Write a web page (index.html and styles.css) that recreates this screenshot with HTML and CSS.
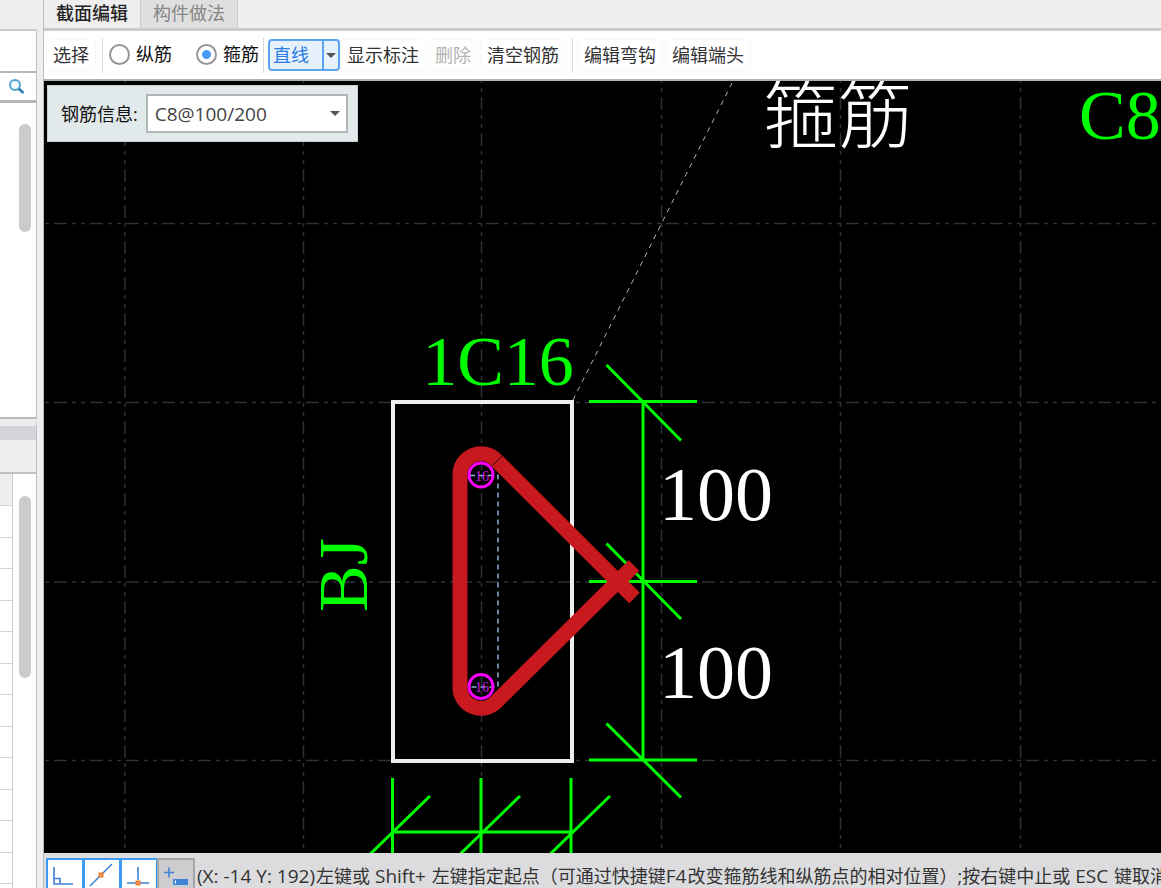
FILE: index.html
```html
<!DOCTYPE html>
<html lang="zh-CN">
<head>
<meta charset="utf-8">
<title>截面编辑</title>
<link rel="stylesheet" href="styles.css">
</head>
<body>
<div class="app">
  <aside class="sidebar">
    <div class="side-head"></div>
    <div class="side-tools"></div>
    <div class="side-search">
      <button class="search-btn" type="button" aria-label="搜索">
        <svg width="18" height="18" viewBox="0 0 18 18"><circle cx="7" cy="7" r="5" fill="#f2fafd" stroke="#4da3cf" stroke-width="2"/><path d="M10.5 10.5L15.500 15" stroke="#2f86b8" stroke-width="3"/></svg>
      </button>
    </div>
    <div class="side-list"><div class="thumb thumb-list"></div></div>
    <div class="side-split"></div>
    <div class="side-title"></div>
    <div class="side-props">
      <table class="props">
        <tr><th></th></tr>
        <tr><td></td></tr><tr><td></td></tr><tr><td></td></tr><tr><td></td></tr>
        <tr><td></td></tr><tr><td></td></tr><tr><td></td></tr><tr><td></td></tr>
        <tr><td></td></tr><tr><td></td></tr><tr><td></td></tr><tr><td></td></tr><tr><td></td></tr>
      </table>
      <div class="thumb thumb-props"></div>
    </div>
  </aside>

  <main class="main">
    <nav class="tabs">
      <button class="tab tab-active" type="button">截面编辑</button>
      <button class="tab" type="button">构件做法</button>
    </nav>
    <div class="toolbar">
      <button class="tool" type="button">选择</button>
      <span class="sep"></span>
      <label class="choice"><input type="radio" name="bar">纵筋</label>
      <label class="choice choice-last"><input type="radio" name="bar" checked>箍筋</label>
      <span class="sep"></span>
      <div class="split">
        <button class="split-main" type="button">直线</button>
        <button class="split-drop" type="button" aria-label="更多"><span class="caret"></span></button>
      </div>
      <button class="tool" type="button">显示标注</button>
      <button class="tool" type="button" disabled>删除</button>
      <button class="tool" type="button">清空钢筋</button>
      <span class="sep"></span>
      <button class="tool" type="button">编辑弯钩</button>
      <button class="tool" type="button">编辑端头</button>
    </div>

    <section class="canvas">
      <svg class="drawing" width="100%" height="100%">
        <g transform="translate(-44 -81)">
          <g class="grid">
            <path d="M125 61V2000M303.500 61V2000M481.500 61V2000M661.500 61V2000M840.500 61V2000M1020.500 61V2000"/>
            <path d="M18 223.500H3000M18 402.500H3000M18 582H3000M18 760.500H3000"/>
          </g>
          <path class="guide" d="M573 400L732 83"/>
          <rect class="outline" x="393" y="402" width="179" height="359"/>
          <g class="dims">
            <path d="M643 401V760M589 401.500H697M589 581.500H697M589 760H697"/>
            <path d="M606.500 365L681 440.500M606.500 543.500L681 619M606.500 723.500L681 797.500"/>
            <path d="M392.500 778V900M481 778V900M571 778V900M392 832H573"/>
            <path d="M430 796L324 899M520 796L414 899M610 796L504 899"/>
          </g>
          <path class="offset" d="M470 475.500H498V687H470"/>
          <path class="stirrup" d="M634.500 598L496 460A21 21 0 0 0 460 475V687A21 21 0 0 0 496 702L634 565.500"/>
          <path class="joint" d="M492 466L502.500 455.500"/>
          <circle class="rebar" cx="481" cy="475" r="12"/>
          <circle class="rebar" cx="481" cy="686.500" r="12"/>
          <text class="rebar-label" x="482" y="481">16</text>
          <text class="rebar-label" x="482" y="692">16</text>
          <text class="cad green" x="498" y="385" text-anchor="middle">1C16</text>
          <text class="cad green" x="1079" y="139">C8</text>
          <text class="cad green" transform="translate(367 612) rotate(-90)">BJ</text>
          <text class="cad white" x="659" y="520">100</text>
          <text class="cad white" x="659" y="698">100</text>
          <text class="cad-cjk white" x="763" y="142">箍筋</text>
        </g>
      </svg>
      <div class="info">
        <label for="rebar-info">钢筋信息:</label>
        <div class="combo">
          <select id="rebar-info"><option>C8@100/200</option></select>
          <span class="caret"></span>
        </div>
      </div>
    </section>

    <footer class="status">
      <button class="snap" type="button" aria-label="正交">
        <svg width="34" height="34" viewBox="0 0 34 34" fill="none" stroke="#3f83d6" stroke-width="1.600"><path d="M6 7V24H25M6 18.500H12V24"/></svg>
      </button>
      <button class="snap" type="button" aria-label="中点">
        <svg width="34" height="34" viewBox="0 0 34 34" fill="none" stroke="#3f83d6" stroke-width="1.600"><path d="M5 26L27 4"/><rect x="14.500" y="13.500" width="3" height="3" fill="#fff" stroke="#ee7d32" stroke-width="2"/></svg>
      </button>
      <button class="snap" type="button" aria-label="垂足">
        <svg width="34" height="34" viewBox="0 0 34 34" fill="none" stroke="#3f83d6" stroke-width="1.600"><path d="M16 7V20M5 23H27"/><rect x="14.500" y="21.500" width="3" height="3" fill="#fff" stroke="#ee7d32" stroke-width="2"/></svg>
      </button>
      <button class="snap snap-on" type="button" aria-label="动态输入">
        <svg width="34" height="34" viewBox="0 0 34 34" fill="none" stroke="#3f83d6" stroke-width="1.600"><path d="M5 12.500H15M10 7.500V17.500"/><rect x="14" y="19" width="15" height="6" fill="#3f83d6" stroke="none"/><path d="M16.500 20.500V23.500" stroke="#fff" stroke-width="1.200"/></svg>
      </button>
      <span class="hint"><span class="latin">(X: -14 Y: 192)</span>左键或<span class="latin"> Shift+ </span>左键指定起点（可通过快捷键<span class="latin">F4</span>改变箍筋线和纵筋点的相对位置）;按右键中止或<span class="latin"> ESC </span>键取消</span>
    </footer>
  </main>
</div>
</body>
</html>
```
FILE: styles.css
```css
* { box-sizing: border-box; }

body {
  margin: 0;
  overflow: hidden;
  font: 18px/24px "Open Sans", "Noto Sans CJK SC", sans-serif;
  color: #333;
}

button, select, input { margin: 0; font: inherit; color: inherit; }
button { padding: 0; border: 0; background: none; white-space: nowrap; }

.app {
  display: grid;
  grid-template-columns: 37px minmax(0, 1fr);
  column-gap: 6px;
  height: 100vh;
  background: #eeeeee;
}

/* sidebar */
.sidebar {
  display: flex;
  flex-direction: column;
  min-height: 0;
  overflow: hidden;
}
.sidebar > div { flex: none; border-right: 1px solid #bfc2c5; }
.sidebar > .side-head { height: 31px; border-right: 0; border-bottom: 2px solid #c9ccd1; }
.side-tools { height: 40px; background: #fff; }
.side-search {
  display: flex;
  justify-content: flex-end;
  align-items: center;
  height: 32px;
  padding-right: 10px;
  background: #fff;
  border-top: 2px solid #bababa;
  border-bottom: 3px solid #b5b5b5;
}
.search-btn { height: 18px; line-height: 0; }
.side-list {
  height: 316px;
  padding: 21px 5px 0 0;
  background: #fff;
  border-bottom: 2px solid #b8b8b8;
}
.thumb { width: 12px; margin-left: auto; border-radius: 6px; background: #cbcbcb; }
.thumb-list { height: 108px; }
.side-split { height: 21px; border-top: 7px solid #eee; background: #d2d4da; }
.side-title { height: 34px; border-bottom: 2px solid #c0c0c2; }
.sidebar > .side-props {
  display: flex;
  flex: 1;
  align-items: flex-start;
  min-height: 0;
  padding-right: 5px;
  background: #fff;
}
.props { width: 13px; border-collapse: separate; border-spacing: 0; }
.props th, .props td {
  height: 31px;
  padding: 0;
  border-right: 1px solid #ccc;
  border-bottom: 1px solid #d4d4d4;
}
.props th { height: 32px; background: #eee; }
.props tr:nth-child(even) td { height: 32px; }
.thumb-props { height: 182px; margin-top: 22px; }

/* tabs and toolbar */
.main { display: flex; flex-direction: column; min-width: 0; min-height: 0; border-left: 1px solid #b9bcc0; }
.tabs { display: flex; flex: none; height: 31px; border-bottom: 3px solid #c9ccd1; }
.tab { height: 28px; padding: 0 12px 2px; background: #dfdfdf; color: #858585; border-right: 1px solid #cacccf; }
.tab-active { background: #eee; color: #222; font-weight: 500; }

.toolbar {
  display: flex;
  flex: none;
  align-items: center;
  height: 50px;
  padding: 0 2px;
  background: #fff;
  border-bottom: 2px solid #adb2b2;
}
.tool {
  height: 32px;
  padding: 0 6px;
  border: 1px solid #f8f8f8;
  border-radius: 4px;
  margin-right: 2px;
}
.tool:disabled { color: #b3b3b3; }
.sep { width: 1px; height: 35px; margin: 0 4px; background: #dadada; }
.choice { display: flex; align-items: center; gap: 6px; padding: 0 22px 2px 2px; color: #111; }
.choice-last { padding-right: 0; }
.choice input {
  appearance: none;
  width: 21px;
  height: 21px;
  border: 2px solid #969696;
  border-radius: 50%;
  background: #fff;
}
.choice input:checked { background: radial-gradient(circle, #4a9bfa 4px, #fff 5px); }
.split {
  display: flex;
  height: 32px;
  border: 2px solid #5ba4f0;
  border-radius: 4px;
  background: #e7f1fc;
  color: #2a7ce6;
}
.split-main { padding: 0 13px 0 3px; border-right: 2px solid #5ba4f0; }
.split-drop { display: grid; place-items: center; width: 14px; }
.caret { border: 5px solid transparent; border-top: 5px solid #555; border-bottom: 0; }

/* drawing area */
.canvas { position: relative; flex: 1; min-height: 0; overflow: hidden; background: #000; }
.drawing { display: block; position: absolute; inset: 0; }
.drawing path, .drawing rect, .drawing circle { fill: none; }
.grid { stroke: #2b303b; stroke-width: 1.5; stroke-dasharray: 13 5 4 5 4 5; }
.guide { stroke: #b4b4b4; stroke-width: 1; stroke-dasharray: 5 5; }
.outline { stroke: #eee; stroke-width: 4; }
.dims { stroke: #0f0; stroke-width: 3; }
.offset { stroke: #8fb2d8; stroke-width: 1.5; stroke-dasharray: 5 4; }
.stirrup { stroke: #c8191e; stroke-width: 15; }
.joint { stroke: #3a0608; stroke-width: 1; }
.rebar { stroke: #f0f; stroke-width: 3; }
.rebar-label { font: 14px "Liberation Serif", serif; fill: #d01ae8; text-anchor: middle; }
.cad { font: 70px "Liberation Serif", serif; }
.cad.white { font-size: 76px; }
.cad-cjk { font: 300 75px "Noto Sans CJK SC", sans-serif; }
.green { fill: #0f0; }
.white { fill: #fff; }

.info {
  position: absolute;
  top: 4px;
  left: 3px;
  display: flex;
  align-items: center;
  gap: 8px;
  height: 57px;
  padding: 0 9px 0 13px;
  background: #e1e9ea;
  border: 1px solid #c9cfd0;
  color: #111;
}
.combo { display: grid; align-items: center; width: 202px; }
.combo select {
  grid-area: 1 / 1;
  appearance: none;
  width: 100%;
  height: 39px;
  padding: 0 7px;
  border: 2px solid #b3b6b6;
  border-radius: 0;
  background: #fff;
  color: #444;
  font-size: 19px;
}
.combo .caret { grid-area: 1 / 1; justify-self: end; margin-right: 8px; pointer-events: none; }

/* status bar */
.status {
  display: flex;
  flex: none;
  align-items: flex-start;
  height: 35px;
  padding: 5px 0 0 2px;
  overflow: hidden;
  background: #dcdcde;
}
.snap { flex: none; width: 38px; height: 38px; border: 2px solid #3c9cf5; background: #fff; line-height: 0; }
.snap + .snap { margin-left: -1px; }
.snap-on { border-color: #a5a5a7; background: #cdcdcf; }
.hint { flex: none; padding: 6px 0 0 2px; white-space: nowrap; }
.latin { margin-right: 1px; font-size: 19px; }
```
